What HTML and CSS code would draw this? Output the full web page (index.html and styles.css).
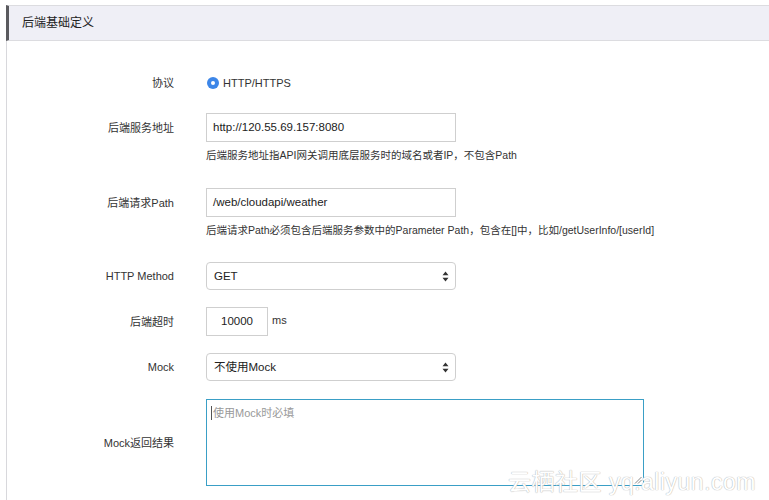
FILE: index.html
```html
<!DOCTYPE html>
<html lang="zh">
<head>
<meta charset="utf-8">
<link rel="stylesheet" href="styles.css">
</head>
<body>
<div class="panel">
  <div class="panel-head">后端基础定义</div>
  <div class="form">
    <div class="row row-radio">
      <div class="label">协议</div>
      <div class="control radio-line">
        <span class="radio"></span><span>HTTP/HTTPS</span>
      </div>
    </div>
    <div class="row-group group-1">
      <div class="row">
        <div class="label">后端服务地址</div>
        <div class="control"><div class="input wide">http://120.55.69.157:8080</div></div>
      </div>
      <div class="help">后端服务地址指API网关调用底层服务时的域名或者IP，不包含Path</div>
    </div>
    <div class="row-group group-2">
      <div class="row">
        <div class="label">后端请求Path</div>
        <div class="control"><div class="input wide">/web/cloudapi/weather</div></div>
      </div>
      <div class="help">后端请求Path必须包含后端服务参数中的Parameter Path，包含在[]中，比如/getUserInfo/[userId]</div>
    </div>
    <div class="row">
      <div class="label">HTTP Method</div>
      <div class="control">
        <div class="select wide"><span>GET</span>
          <svg class="arrows" width="7" height="11" viewBox="0 0 7 11"><path d="M3.5 0.5 L6.5 4.3 H0.5 Z M3.5 10.5 L6.5 6.7 H0.5 Z" fill="#333"/></svg>
        </div>
      </div>
    </div>
    <div class="row">
      <div class="label">后端超时</div>
      <div class="control timeout">
        <div class="input short">10000</div><span class="unit">ms</span>
      </div>
    </div>
    <div class="row">
      <div class="label">Mock</div>
      <div class="control">
        <div class="select wide"><span>不使用Mock</span>
          <svg class="arrows" width="7" height="11" viewBox="0 0 7 11"><path d="M3.5 0.5 L6.5 4.3 H0.5 Z M3.5 10.5 L6.5 6.7 H0.5 Z" fill="#333"/></svg>
        </div>
      </div>
    </div>
    <div class="row row-textarea">
      <div class="label">Mock返回结果</div>
      <div class="control">
        <div class="textarea"><span class="caret"></span><span class="placeholder">使用Mock时必填</span>
          <svg class="grip" width="8" height="8" viewBox="0 0 8 8"><path d="M7.5 1 L1 7.5 M7.5 4 L4 7.5" stroke="#888" stroke-width="1"/></svg>
        </div>
      </div>
    </div>
  </div>
</div>
<div class="watermark">云栖社区 yq.aliyun.com</div>
</body>
</html>
```

FILE: styles.css
```css
html, body {
  margin: 0;
  padding: 0;
  background: #fff;
  height: 500px;
  overflow: hidden;
}
body {
  font-family: "Liberation Sans", "Noto Sans CJK SC", sans-serif;
  font-size: 11px;
  color: #333;
  position: relative;
}
.panel {
  margin: 5px 0 0 6px;
  border-left: 1px solid #d8d8dc;
  height: 495px;
}
.panel-head {
  margin-left: -1px;
  height: 34px;
  line-height: 34px;
  background: #efeff6;
  border-top: 1px solid #dcdce0;
  border-bottom: 1px solid #dcdce0;
  border-left: 3px solid #5a5a5e;
  padding-left: 13px;
  font-size: 12px;
  color: #222;
}
.form {
  display: flex;
  flex-direction: column;
  gap: 17px;
  padding-top: 32px;
}
.row {
  display: grid;
  grid-template-columns: 167px 1fr;
  column-gap: 32px;
  align-items: center;
  line-height: 16px;
}
.row-radio {
  height: 20px;
  margin-bottom: 3px;
}
.row-group {
  display: flex;
  flex-direction: column;
  gap: 5px;
}
.group-1 {
  margin-bottom: 8px;
}
.group-2 {
  margin-bottom: 7px;
}
.row-textarea {
  margin-top: 1px;
}
.label {
  text-align: right;
  color: #333;
}
.control {
  display: flex;
  align-items: center;
}
.radio-line {
  gap: 4px;
}
.radio {
  width: 12px;
  height: 12px;
  border-radius: 50%;
  background: #3d86e8;
  display: flex;
  align-items: center;
  justify-content: center;
  margin-left: 1px;
}
.radio::after {
  content: "";
  width: 4px;
  height: 4px;
  border-radius: 50%;
  background: #fff;
}
.input {
  box-sizing: border-box;
  height: 29px;
  line-height: 27px;
  border: 1px solid #cfcfcf;
  padding: 0 6px;
  background: #fff;
  color: #222;
  font-size: 11.5px;
}
.wide {
  width: 250px;
}
.help {
  padding-left: 199px;
  color: #333;
  font-size: 10.5px;
  line-height: 16px;
}
.select {
  box-sizing: border-box;
  height: 28px;
  border: 1px solid #cfcfcf;
  border-radius: 4px;
  padding: 0 6px 0 7px;
  display: flex;
  align-items: center;
  justify-content: space-between;
  color: #222;
  font-size: 11.5px;
}
.arrows {
  display: block;
}
.timeout {
  gap: 4px;
}
.short {
  width: 62px;
  text-align: center;
  padding: 0;
}
.unit {
  margin-top: -3px;
}
.textarea {
  box-sizing: border-box;
  width: 438px;
  height: 87px;
  border: 1px solid #3a9fc6;
  padding: 6px 4px;
  position: relative;
  display: flex;
  align-items: flex-start;
}
.caret {
  width: 1px;
  height: 14px;
  background: #555;
  margin-right: 1px;
}
.placeholder {
  color: #999;
  line-height: 14px;
}
.grip {
  position: absolute;
  right: 1px;
  bottom: 1px;
}
.watermark {
  position: absolute;
  left: 508px;
  top: 463px;
  font-size: 23px;
  font-family: "Liberation Sans", "Noto Sans CJK SC", sans-serif;
  color: #fff;
  letter-spacing: 0.5px;
  text-shadow: 0 0 1px #b5b5b5, 0 0 1px #b5b5b5;
  white-space: nowrap;
}
```
